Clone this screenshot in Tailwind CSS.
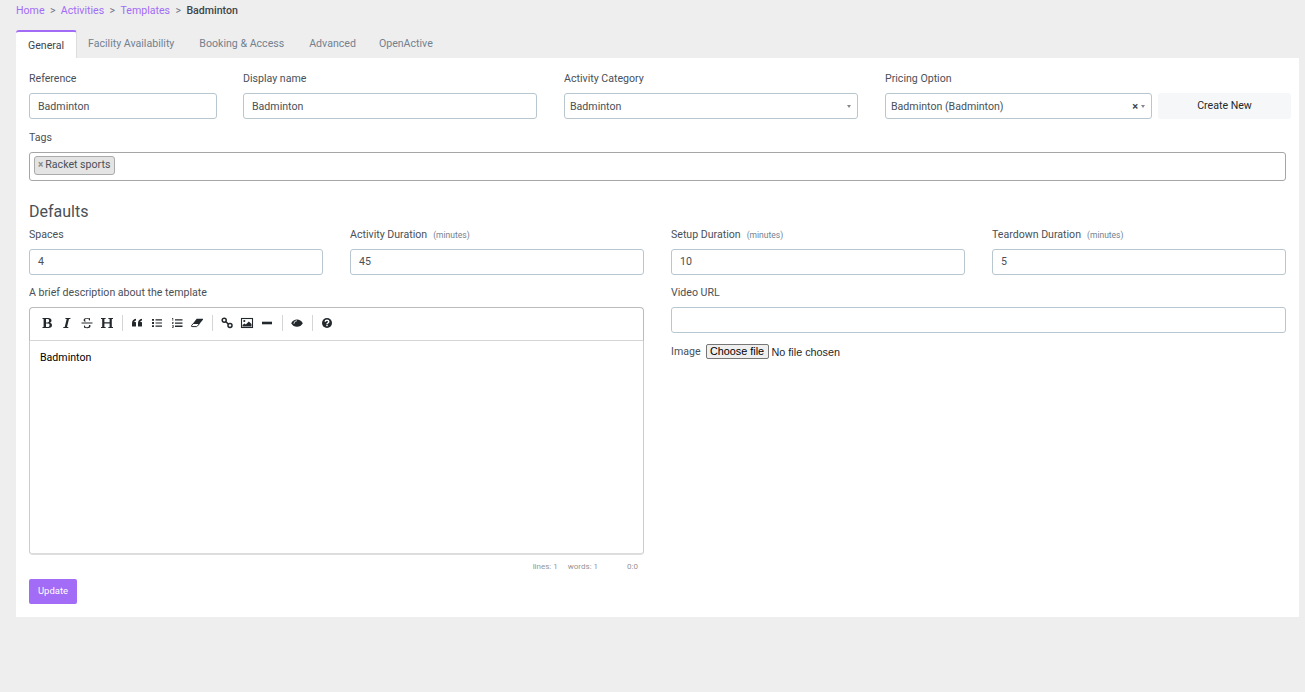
<!doctype html>
<html>
<head>
<meta charset="utf-8">
<script src="https://cdn.jsdelivr.net/npm/@tailwindcss/browser@4"></script>
</head>
<body class="bg-[#eeeeee] font-[Roboto,sans-serif] text-[10.6px] text-[#495057] h-[692px] overflow-hidden">
<div class="pl-4 pr-[6px]">
  <nav class="h-[30px] pt-[4px] flex items-start leading-[14px]">
    <a class="text-[#a26cf6]">Home</a><span class="text-[#6b7280] mx-[5.4px]">&gt;</span>
    <a class="text-[#a26cf6]">Activities</a><span class="text-[#6b7280] mx-[5.4px]">&gt;</span>
    <a class="text-[#a26cf6]">Templates</a><span class="text-[#6b7280] mx-[5.4px]">&gt;</span>
    <span class="font-medium text-[#3e444a]">Badminton</span>
  </nav>
  <div class="flex h-[28px] items-stretch">
    <div class="w-[61px] bg-white rounded-t-[3px] border-t-2 border-[#a26cf6] flex items-center justify-center pt-[1px] text-[#3e444a] border-r border-r-[#dddddd]">General</div>
    <div class="flex items-center pl-[11px] pr-[13px] text-[#73818f]">Facility Availability</div>
    <div class="flex items-center px-3 text-[#73818f]">Booking &amp; Access</div>
    <div class="flex items-center pl-[13px] pr-3 text-[#73818f]">Advanced</div>
    <div class="flex items-center pl-[11px] pr-3 text-[#73818f]">OpenActive</div>
  </div>
  <main class="bg-white h-[559px] pl-[13px] pr-[13px] pt-[14px]">
    <div class="flex">
      <label class="w-[188px] mr-[26px] block shrink-0"><span class="block h-[21px] leading-[14px]">Reference</span>
        <span class="flex items-center h-[26px] border border-[#b8c6d0] rounded-[3px] pl-[8px] pt-[1px]">Badminton</span></label>
      <label class="w-[294px] mr-[27px] block shrink-0"><span class="block h-[21px] leading-[14px]">Display name</span>
        <span class="flex items-center h-[26px] border border-[#b8c6d0] rounded-[3px] pl-[8px] pt-[1px]">Badminton</span></label>
      <label class="w-[294px] mr-[27px] block shrink-0"><span class="block h-[21px] leading-[14px]">Activity Category</span>
        <span class="flex items-center justify-between h-[26px] border border-[#b8c6d0] rounded-[3px] pl-[5px] pr-[6px] pt-[1px]">Badminton<span class="w-0 h-0 border-x-[2px] border-x-transparent border-t-[3px] border-t-[#888888]"></span></span></label>
      <label class="w-[267px] mr-[6px] block shrink-0"><span class="block h-[21px] leading-[14px]">Pricing Option</span>
        <span class="flex items-center h-[26px] border border-[#b8c6d0] rounded-[3px] pl-[5px] pr-[6px] pt-[1px]">Badminton (Badminton)<span class="ml-auto font-bold text-[#3e444a] text-[11px] leading-none mr-[3px]">×</span><span class="w-0 h-0 border-x-[2px] border-x-transparent border-t-[3px] border-t-[#888888]"></span></span></label>
      <div class="w-[133px] pt-[21px] shrink-0"><div class="h-[26px] bg-[#f6f7f9] rounded-[3px] flex items-center justify-center pb-[1px] text-[#23282c]">Create New</div></div>
    </div>
    <div class="mt-[12px] w-[1257px]">
      <div class="h-[21px] leading-[14px]">Tags</div>
      <div class="h-[29px] border border-[#a6a6a6] rounded-[3px] pl-1 pt-[3px]">
        <span class="inline-flex items-center h-[19px] bg-[#e4e4e4] border border-[#aaaaaa] rounded-[3px] pl-[3px] pr-[4px] pb-[2px]"><b class="text-[#888888] text-[10px] mr-[2px] font-bold leading-none">×</b>Racket sports</span>
      </div>
    </div>
    <h2 class="text-[16px] leading-[20px] mt-[21px] text-[#495057]">Defaults</h2>
    <div class="grid grid-cols-4 gap-x-[27px] w-[1257px] mt-[6px]">
      <label class="block"><span class="flex items-baseline h-[21px] leading-[14px]">Spaces</span>
        <span class="flex items-center h-[26px] border border-[#b8c6d0] rounded-[3px] pl-[8px]">4</span></label>
      <label class="block"><span class="flex items-baseline h-[21px] leading-[14px]">Activity Duration<small class="text-[8.5px] text-[#73818f] ml-[6px]">(minutes)</small></span>
        <span class="flex items-center h-[26px] border border-[#b8c6d0] rounded-[3px] pl-[8px]">45</span></label>
      <label class="block"><span class="flex items-baseline h-[21px] leading-[14px]">Setup Duration<small class="text-[8.5px] text-[#73818f] ml-[6px]">(minutes)</small></span>
        <span class="flex items-center h-[26px] border border-[#b8c6d0] rounded-[3px] pl-[8px]">10</span></label>
      <label class="block"><span class="flex items-baseline h-[21px] leading-[14px]">Teardown Duration<small class="text-[8.5px] text-[#73818f] ml-[6px]">(minutes)</small></span>
        <span class="flex items-center h-[26px] border border-[#b8c6d0] rounded-[3px] pl-[8px]">5</span></label>
    </div>
    <div class="grid grid-cols-2 gap-x-[27px] w-[1257px] mt-[11px]">
      <div>
        <div class="h-[21px] leading-[14px]">A brief description about the template</div>
        <div class="w-[615px]">
          <div class="h-[34px] border border-[#bbbbbb] border-b-[#d5d5d5] rounded-t-[4px] flex items-center pl-[9px] pb-[2px] text-[#23282c]">
            <svg class="w-[16px] h-[16px]" viewBox="0 0 16 16"><path fill="#23282c" d="M3.500 3h5.700c2.100 0 3.300 1 3.300 2.600 0 1.100-.7 1.900-1.800 2.200 1.400.2 2.300 1.100 2.300 2.400 0 1.800-1.300 2.800-3.500 2.800h-6v-1h1.100V4H3.500zm3.500 1v3.400h1.500c1 0 1.600-.6 1.600-1.700S9.500 4 8.500 4zm0 4.400V12h1.800c1.100 0 1.700-.7 1.700-1.800S10.400 8.400 9.200 8.400z"/></svg>
            <svg class="w-[16px] h-[16px] ml-[4px]" viewBox="0 0 16 16"><path fill="#23282c" d="M6.500 3h5l-.2 1h-1.300L8 12h1.400l-.2 1h-5l.2-1h1.300l2-8H6.300z"/></svg>
            <svg class="w-[16px] h-[16px] ml-[4px]" viewBox="0 0 16 16"><path fill="#23282c" d="M2.500 7.500h11v.9h-11zM11 3v2.500h-.7C10.100 4.500 9.400 3.800 8 3.800c-1.200 0-1.900.5-1.900 1.300 0 .6.300 1 .8 1.300H5.200c-.4-.3-.6-.8-.6-1.400C4.600 3.700 6 3 7.800 3c1 0 1.700.2 2.400.6l.2-.6zM5 13v-2.600h.7c.2 1.100 1 1.800 2.400 1.800 1.300 0 2-.5 2-1.400 0-.4-.1-.7-.4-.9h1.500c.2.300.3.700.3 1.100 0 1.600-1.400 2.200-3.400 2.200-1 0-1.900-.2-2.600-.7l-.2.500z"/></svg>
            <svg class="w-[16px] h-[16px] ml-[4px]" viewBox="0 0 16 16"><path fill="#23282c" d="M2 3h4.600v1H5.400v3.300h5.200V4H9.400V3H14v1h-1.200v8H14v1H9.400v-1h1.200V8.400H5.400V12h1.200v1H2v-1h1.200V4H2z"/></svg>
            <span class="w-px h-[16px] bg-[#d5d5d5] ml-[7px] mr-[6px]"></span>
            <svg class="w-[16px] h-[16px]" viewBox="0 0 16 16"><path fill="#23282c" d="M3 8.200C3 5.800 4.300 4.300 7 3.800v1.700c-1.100.2-1.600.7-1.700 1.400h1.100c.4 0 .6.200.6.600v3.400c0 .4-.2.600-.6.600H3.600c-.4 0-.6-.2-.6-.6zm6 0c0-2.400 1.300-3.900 4-4.400v1.700c-1.100.2-1.600.7-1.700 1.400h1.100c.4 0 .6.200.6.600v3.400c0 .4-.2.600-.6.600H9.600c-.4 0-.6-.2-.6-.6z"/></svg>
            <svg class="w-[16px] h-[16px] ml-[4px]" viewBox="0 0 16 16"><path fill="#23282c" d="M3 4h2v1.800H3zm0 3.100h2v1.800H3zm0 3.100h2V12H3zM6.500 4.300H13v1.200H6.500zm0 3.100H13v1.200H6.500zm0 3.100H13v1.200H6.500z"/></svg>
            <svg class="w-[16px] h-[16px] ml-[4px]" viewBox="0 0 16 16"><path fill="#23282c" d="M3 3h1.200v2.800h-.7V3.700H3zM3 6.900h1.600v.6l-.9.9h.9v.6H3v-.6l.9-.9H3zm0 3.100h1.600v2.700H3v-.6h.9v-.5h-.5v-.5h.5v-.5H3zM6 4.200h7.500v1.300H6zm0 3.200h7.500v1.300H6zm0 3.200h7.500v1.300H6z"/></svg>
            <svg class="w-[16px] h-[16px] ml-[4px]" viewBox="0 0 16 16"><path fill="#23282c" d="M7.300 4.200c.3-.3.500-.4.900-.4h5.300c.5 0 .7.500.4.900L10.800 8.500H4z"/><path fill="none" stroke="#23282c" stroke-width="1" d="M4.200 8.500h6.400l-2.300 2.700c-.3.300-.5.400-.9.400H2.900c-.5 0-.7-.5-.4-.9z"/></svg>
            <span class="w-px h-[16px] bg-[#d5d5d5] ml-[7px] mr-[6px]"></span>
            <svg class="w-[16px] h-[16px]" viewBox="0 0 16 16"><g fill="none" stroke="#23282c" stroke-width="1.500"><rect x="3.200" y="3.200" width="4" height="4" rx="1.900"/><rect x="9" y="8.400" width="4" height="4" rx="1.900"/></g><path stroke="#23282c" stroke-width="1.500" d="M6.500 6.500l3 2.600"/></svg>
            <svg class="w-[16px] h-[16px] ml-[4px]" viewBox="0 0 16 16"><rect x="2.500" y="3.500" width="11" height="9" fill="none" stroke="#23282c" stroke-width="1.100"/><circle cx="5.300" cy="6" r="1.100" fill="#23282c"/><path fill="#23282c" d="M3.500 11.500V10l2-1.500 1.300 1 3-3 2.700 2.500v2.500z"/></svg>
            <svg class="w-[16px] h-[16px] ml-[4px]" viewBox="0 0 16 16"><rect x="3" y="6.700" width="10" height="2.600" fill="#23282c"/></svg>
            <span class="w-px h-[16px] bg-[#d5d5d5] ml-[7px] mr-[6px]"></span>
            <svg class="w-[16px] h-[16px]" viewBox="0 0 16 16"><path fill="#23282c" d="M2.200 8.200C3.500 5.900 5.600 4.600 8 4.600s4.500 1.300 5.800 3.600c-1.300 2.300-3.400 3.600-5.800 3.600s-4.500-1.300-5.800-3.600z"/><path fill="none" stroke="#fff" stroke-width=".8" d="M4.900 8.800A3.200 3.200 0 0 1 8 5.700"/></svg>
            <span class="w-px h-[16px] bg-[#d5d5d5] ml-[7px] mr-[6px]"></span>
            <svg class="w-[16px] h-[16px]" viewBox="0 0 16 16"><circle cx="8" cy="8" r="5" fill="#23282c"/><path fill="none" stroke="#fff" stroke-width="1.400" d="M6.200 6.800C6.200 5.700 7 5.200 8 5.200s1.800.6 1.800 1.500c0 1.300-1.800 1.300-1.800 2.500"/><rect x="7.300" y="9.800" width="1.400" height="1.400" fill="#fff"/></svg>
          </div>
          <div class="h-[214px] border border-t-0 border-[#cccccc] border-b-2 border-b-[#dddddd] rounded-b-[4px] pl-[10px] pt-[10px] text-[#000000] leading-[14px]">Badminton</div>
          <div class="flex justify-end h-[17px] items-center text-[8px] text-[#959595] pr-[6px] pt-[6px]">
            <span class="mr-[10px]">lines: 1</span><span class="mr-[29px]">words: 1</span><span>0:0</span>
          </div>
        </div>
        <button class="block mt-[7px] w-[48px] h-[25px] bg-[#a26cf6] rounded-[2px] text-white text-[9.5px]">Update</button>
      </div>
      <div>
        <div class="h-[21px] leading-[14px]">Video URL</div>
        <div class="h-[26px] border border-[#b8c6d0] rounded-[3px]"></div>
        <div class="flex items-center mt-[11px] h-[16px]">
          <span class="mr-[5px]">Image</span>
          <span class="self-start h-[15px] px-[3.5px] flex items-center bg-[#efefef] border border-[#767676] rounded-[2px] text-[10.8px] text-black font-['Liberation_Sans',sans-serif]">Choose file</span>
          <span class="ml-[3px] text-[10.8px] text-[#23282c] font-['Liberation_Sans',sans-serif]">No file chosen</span>
        </div>
      </div>
    </div>
  </main>
</div>
</body>
</html>
